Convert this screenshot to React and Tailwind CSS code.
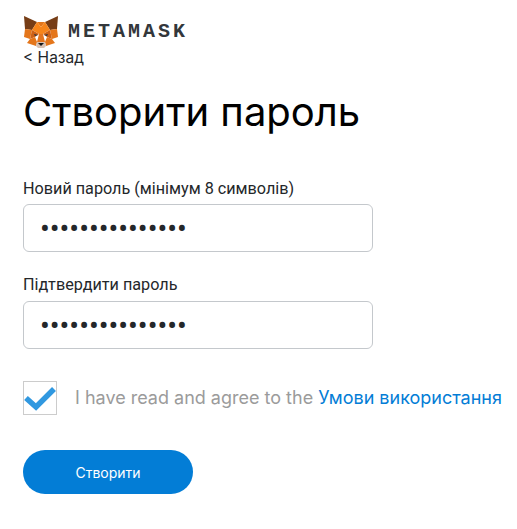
import React from 'react';

const Fox = () => (
    <svg width="36" height="34" viewBox="0 0 36 34" className="block">
        <polygon points="1,1 14,7 9,15 2,14" fill="#763d16" />
        <polygon points="35,1 22,7 27,15 34,14" fill="#763d16" />
        <polygon points="14,7 22,7 18,12" fill="#e2761b" />
        <polygon points="14,7 18,12 18,20 9,15" fill="#f6851b" />
        <polygon points="22,7 18,12 18,20 27,15" fill="#f6851b" />
        <polygon points="2,14 9,15 7,24 1,22" fill="#e4761b" />
        <polygon points="34,14 27,15 29,24 35,22" fill="#e4761b" />
        <polygon points="9,15 16,19 12,22 7,24" fill="#cd6116" />
        <polygon points="27,15 20,19 24,22 29,24" fill="#cd6116" />
        <polygon points="16,19 20,19 22,27 14,27" fill="#e4751f" />
        <polygon points="7,24 12,22 14,27 13,31 4,28" fill="#e4761b" />
        <polygon points="29,24 24,22 22,27 23,31 32,28" fill="#e4761b" />
        <polygon points="11,19 15,20 12,21" fill="#233447" />
        <polygon points="25,19 21,20 24,21" fill="#233447" />
        <polygon points="13,31 14,27 22,27 23,31 21,33 15,33" fill="#d7c1b3" />
        <polygon points="15,28 21,28 18,31" fill="#161616" />
    </svg>
);

export default function App() {
    return (
        <div className="min-h-[529px] bg-white font-['Roboto',sans-serif] text-[#24272a] px-[23px] pt-[15px]">
            <div className="flex items-center h-[34px]">
                <Fox />
                <span className="ml-[9px] text-[20px] leading-none tracking-[3px] font-['Liberation_Mono',monospace] font-bold text-[#33373b]">METAMASK</span>
            </div>

            <a className="block text-[15.5px] leading-[18px] font-['Inter',sans-serif] text-[#24272a]">&lt; Назад</a>

            <h1 className="mt-[22px] text-[40px] leading-[46px] font-['Inter',sans-serif] text-black">Створити пароль</h1>

            <form className="mt-[44px] w-[350px]">
                <label className="block text-[16.2px] leading-[19px]">Новий пароль (мінімум 8 символів)</label>
                <input
                    type="password"
                    readOnly
                    value="123456789012345"
                    className="mt-[6px] block w-full h-[48px] px-4 pt-[2px] border border-[#c4c8cc] rounded-[6px] text-[29px] text-[#24272a] outline-none"
                />

                <label className="block mt-[23px] text-[16.2px] leading-[19px]">Підтвердити пароль</label>
                <input
                    type="password"
                    readOnly
                    value="123456789012345"
                    className="mt-[7px] block w-full h-[48px] px-4 pt-[2px] border border-[#c4c8cc] rounded-[6px] text-[29px] text-[#24272a] outline-none"
                />
            </form>

            <div className="mt-[32px] flex items-center whitespace-nowrap">
                <div className="w-[34px] h-[34px] border border-[#cccccc] flex items-center justify-center">
                    <svg width="32" height="26" viewBox="0 0 32 26">
                        <path d="M2 13 L12 22 L30 4" fill="none" stroke="#3098e0" strokeWidth="5.5" strokeLinejoin="miter" />
                    </svg>
                </div>
                <span className="ml-[18px] text-[18px] leading-[22px] font-['Inter',sans-serif] text-[#9b9b9b]">
                    I have read and agree to the <span className="text-[#037dd6]">Умови використання</span>
                </span>
            </div>

            <button className="mt-[35px] block w-[170px] h-[44px] rounded-[22px] bg-[#037dd6] text-white text-[14px] font-['Inter',sans-serif]">
                Створити
            </button>
        </div>
    );
}
